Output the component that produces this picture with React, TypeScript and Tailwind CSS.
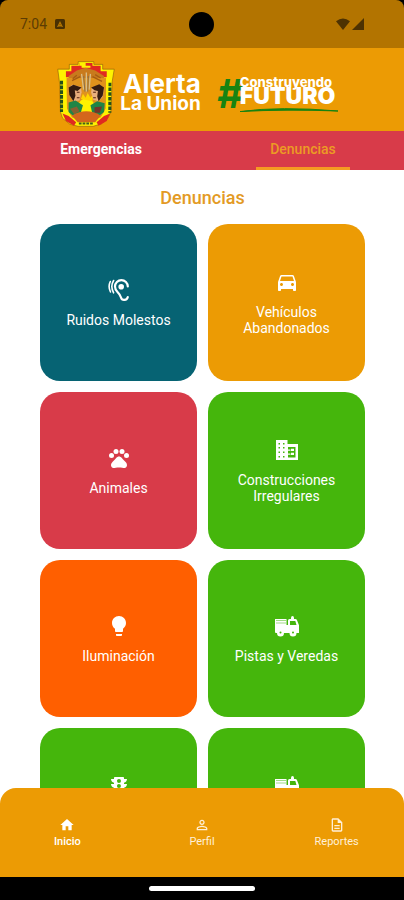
import { useState } from "react";
import type { ComponentType } from "react";
import {
  MdDirectionsCar,
  MdHome,
  MdLightbulb,
  MdOutlineDescription,
  MdPersonOutline,
  MdPets,
  MdTraffic,
} from "react-icons/md";

interface IconProps {
  className?: string;
}

interface Category {
  id: number;
  label: string;
  icon: ComponentType<IconProps>;
  color: string;
}

const HearingIcon = ({ className }: IconProps) => (
  <svg
    className={className}
    viewBox="0 0 24 24"
    fill="none"
    stroke="currentColor"
    strokeWidth="2.2"
    strokeLinecap="round"
  >
    <path d="M20.800 8.500A6.400 6.400 0 0 0 8 8.500Q8 11.500 10.500 14C12.500 16 13.300 16.800 14 19.500 15 23.200 20 22.500 20.800 19" />
    <path d="M6.600 2.500Q3 8.500 6.600 14.800M3.300 3.500Q.800 8.500 3.500 14" strokeWidth="1.6" />
    <circle cx="14.200" cy="8.800" r="2.800" fill="currentColor" stroke="none" />
  </svg>
);

const BuildingIcon = ({ className }: IconProps) => (
  <svg className={className} viewBox="0 0 24 24" fill="currentColor">
    <path
      fillRule="evenodd"
      d="M1 2h11.500v4H23v16H1zM3.500 5v1.500H5V5zm4.500 0v1.500h1.500V5zM3.500 9v1.500H5V9zM8 9v1.500h1.500V9zm-4.500 4.500V15H5v-1.500zm4.500 0V15h1.500v-1.500zM3.500 18v1.500H5V18zM8 18v1.500h1.500V18zM13 9v10.500h7.500V9zm3 1.800h3v2.200h-3zm0 4h3V17h-3z"
    />
    <path d="M12.500 11.500h3v1.300h-3zM12.500 15.500h3v1.300h-3z" />
  </svg>
);

const TruckIcon = ({ className }: IconProps) => (
  <svg className={className} viewBox="0 0 24 24" fill="currentColor">
    <path
      fillRule="evenodd"
      d="M0 5h11.500v6H13V6.500Q13 5 14.500 5H16V4q0-2 1.500-2T19 4v1h1.500q1 0 1.500 1.300l2 5V19h-2.500a3.500 3.500 0 0 1-7 0H9a3.500 3.500 0 0 1-7 0H1q-1 0-1-1zM15 7v4h6.500L20.300 7zM5.500 17.500a1 1 0 1 0 0 2 1 1 0 0 0 0-2zm12.500 0a1 1 0 1 0 0 2 1 1 0 0 0 0-2z"
    />
    <path d="M1 6.500h10M1 9h10" stroke="#45b60c" strokeWidth="0.5" />
  </svg>
);

const categories: Category[] = [
  { id: 1, label: "Ruidos Molestos", icon: HearingIcon, color: "bg-[#066373]" },
  { id: 2, label: "Vehículos Abandonados", icon: MdDirectionsCar, color: "bg-[#ec9b04]" },
  { id: 3, label: "Animales", icon: MdPets, color: "bg-[#d83b49]" },
  { id: 4, label: "Construcciones Irregulares", icon: BuildingIcon, color: "bg-[#45b60c]" },
  { id: 5, label: "Iluminación", icon: MdLightbulb, color: "bg-[#ff5f00]" },
  { id: 6, label: "Pistas y Veredas", icon: TruckIcon, color: "bg-[#45b60c]" },
  { id: 7, label: "Semáforos y Señalización", icon: MdTraffic, color: "bg-[#45b60c]" },
  { id: 8, label: "Recolección de Residuos", icon: TruckIcon, color: "bg-[#45b60c]" },
];

const navItems = [
  { label: "Inicio", icon: MdHome, active: true },
  { label: "Perfil", icon: MdPersonOutline, active: false },
  { label: "Reportes", icon: MdOutlineDescription, active: false },
];

const StatusBar = () => (
  <div className="bg-black">
    <div className="grid h-12 grid-cols-3 items-center rounded-t-lg bg-[#b37400] px-5 text-[#5c3c04]">
      <div className="flex items-center gap-2">
        <span className="text-sm">7:04</span>
        <svg className="size-[10px]" viewBox="0 0 10 10">
          <rect width="10" height="10" rx="1.5" fill="#4a3002" />
          <path d="M5 2 8 8H6.6L5 5 3.4 8H2z" fill="#b37400" />
          <path d="M4 6h2v1.4H4z" fill="#b37400" />
        </svg>
      </div>
      <span className="size-[25px] justify-self-center rounded-full bg-black" />
      <div className="flex items-center gap-[2px] justify-self-end pr-5">
        <svg className="h-3 w-[14px]" viewBox="0 0 14 12">
          <path d="M0 3.2Q7-2.4 14 3.2L7 12z" fill="#4d3202" />
        </svg>
        <svg className="size-3" viewBox="0 0 12 12">
          <path d="M12 0v12H0z" fill="#4d3202" />
        </svg>
      </div>
    </div>
  </div>
);

const Crest = () => (
  <svg className="h-[66px] w-[60px]" viewBox="0 0 170 194" role="img" aria-label="Escudo">
    <path
      d="M2 24H36V10H62V2H108V10H134V24H168L162 60 158 150 150 166 132 184 106 192H62L38 186 16 168 10 150 8 70z"
      fill="#fff200"
      stroke="#7a4a10"
      strokeWidth="1.5"
    />
    <path d="M26 30H42V14H66V6H104V14H128V30H146V48H26z" fill="#e02a20" />
    <path d="M66 6H84V14H98V20H72V14H66z" fill="#fff200" />
    <path d="M34 44 58 28 84 20 112 28 138 44V62H34z" fill="#c97a1c" />
    <path d="M28 50H144V140L128 166 86 180 44 166 28 140z" fill="#e0921c" />
    <path d="M72 38 78 84M86 34V90M98 38 94 84" stroke="#d9bd86" strokeWidth="4" />
    <path d="M44 58 68 46M104 46 132 60M58 42 46 52M112 40 128 50" stroke="#a65c12" strokeWidth="4" />
    <path d="M78 44 82 90M92 44 90 90" stroke="#8d7048" strokeWidth="3" />
    {/* side inscriptions */}
    <path d="M13 58v92" stroke="#26501c" strokeWidth="9" strokeDasharray="11 3" />
    <path d="M155 64v88" stroke="#26501c" strokeWidth="9" strokeDasharray="10 4" />
    <path d="M22 48 26 140 40 168" fill="none" stroke="#fff200" strokeWidth="6" />
    <path d="M148 48 146 140 132 168" fill="none" stroke="#fff200" strokeWidth="6" />
    {/* sun between both figures */}
    <circle cx="86" cy="134" r="24" fill="#fff200" />
    <path d="M70 112 76 96 84 108 90 94 98 108 106 98 104 118z" fill="#ffd500" />
    {/* left figure */}
    <path d="M34 80 44 70 70 76 72 92 66 116 48 118 38 104z" fill="#e9ae7c" />
    <path d="M34 78 48 70 72 78 60 88 52 86 54 102 48 118 36 100z" fill="#351c10" />
    <path d="M58 92h8M58 108h8" stroke="#54220f" strokeWidth="3" />
    <path d="M34 122 54 116 76 130 68 158 48 162 34 150z" fill="#1f8546" />
    <path d="M38 140 58 134 66 148 50 156z" fill="#875f31" />
    {/* right figure */}
    <path d="M102 78 126 70 138 80 134 106 122 118 106 114 100 92z" fill="#e9ae7c" />
    <path d="M100 78 124 68 138 78 134 102 122 118 118 104 120 88 110 86z" fill="#351c10" />
    <path d="M106 92h8M106 108h8" stroke="#54220f" strokeWidth="3" />
    <path d="M98 130 118 118 140 124 138 150 120 164 104 156z" fill="#1f8546" />
    <path d="M110 136 132 134 126 152 110 152z" fill="#74352b" />
    {/* lower ribbon */}
    <path d="M44 160Q86 136 128 160L112 180H60z" fill="#d4661c" />
    <path d="M16 154 34 162 56 180 50 190 26 176z" fill="#e02a20" />
    <path d="M156 154 138 162 116 180 122 190 146 176z" fill="#e02a20" />
    <path d="M64 184h44" stroke="#43601c" strokeWidth="6" strokeDasharray="8 3" />
  </svg>
);

const Header = () => (
  <header className="flex items-center justify-center gap-4 bg-[#ec9b04] pt-[13px] pb-1 pr-[10px] font-[Inter,sans-serif] text-white">
    <div className="flex items-center gap-1">
      <Crest />
      <div className="text-right font-bold">
        <p className="text-[26px] leading-5">Alerta</p>
        <p className="text-[19px] leading-5">La Union</p>
      </div>
    </div>
    <div className="flex items-center">
      <span className="text-[40px] leading-8 font-bold text-[#178311] italic">#</span>
      <div className="-ml-[3px]">
        <p className="text-[13px] leading-[11px] font-extrabold">Construyendo</p>
        <p className="text-[23px] leading-4 font-black">FUTURO</p>
        <svg className="mt-1 h-1 w-full" viewBox="0 0 98 4" preserveAspectRatio="none">
          <path d="M0 3.6Q40-2 98 3 45 1 0 3.6z" fill="#178311" stroke="#178311" />
        </svg>
      </div>
    </div>
  </header>
);

interface TabProps {
  label: string;
  selected: boolean;
  onSelect: () => void;
}

const Tab = ({ label, selected, onSelect }: TabProps) => (
  <button
    role="tab"
    aria-selected={selected}
    onClick={onSelect}
    className={`flex h-[39px] flex-col items-center justify-between text-sm ${
      selected ? "font-medium text-[#ec9b24]" : "font-bold text-white"
    }`}
  >
    <span className="pt-2">{label}</span>
    <span className={`h-[3px] w-[94px] ${selected ? "bg-[#f59b22]" : ""}`} />
  </button>
);

const CategoryCard = ({ category }: { category: Category }) => {
  const Icon = category.icon;
  return (
    <button
      className={`flex aspect-square flex-col items-center justify-center gap-[10px] rounded-[20px] px-4 text-white ${category.color}`}
    >
      <Icon className="size-6" />
      <span className="text-sm leading-4">{category.label}</span>
    </button>
  );
};

const BottomNav = () => (
  <nav className="relative -mt-4 grid grid-cols-3 rounded-t-2xl bg-[#ec9b04] pt-[29px] pb-[27px] text-[11px]">
    {navItems.map(({ label, icon: Icon, active }) => (
      <a
        key={label}
        href="#"
        className={`flex flex-col items-center gap-px leading-4 ${
          active ? "font-medium text-white" : "text-[#fff0d8]"
        }`}
      >
        <Icon className="size-4" />
        {label}
      </a>
    ))}
  </nav>
);

export default function App() {
  const [tab, setTab] = useState("Denuncias");

  return (
    <div className="flex h-screen flex-col bg-white font-[Roboto,sans-serif]">
      <StatusBar />
      <Header />
      <div role="tablist" className="grid grid-cols-2 bg-[#d83b49]">
        {["Emergencias", "Denuncias"].map((label) => (
          <Tab key={label} label={label} selected={tab === label} onSelect={() => setTab(label)} />
        ))}
      </div>
      <main className="min-h-0 flex-1 overflow-y-auto pr-[39px] pl-10 [scrollbar-width:none]">
        <h1 className="pt-4 pb-[14px] text-center text-lg leading-6 font-medium text-[#e39a24]">
          {tab}
        </h1>
        <div className="grid grid-cols-2 gap-[11px] pb-8">
          {categories.map((category) => (
            <CategoryCard key={category.id} category={category} />
          ))}
        </div>
      </main>
      <BottomNav />
      <div className="flex h-[23px] items-center justify-center bg-black">
        <span className="h-[5px] w-[106px] rounded-full bg-white" />
      </div>
    </div>
  );
}
